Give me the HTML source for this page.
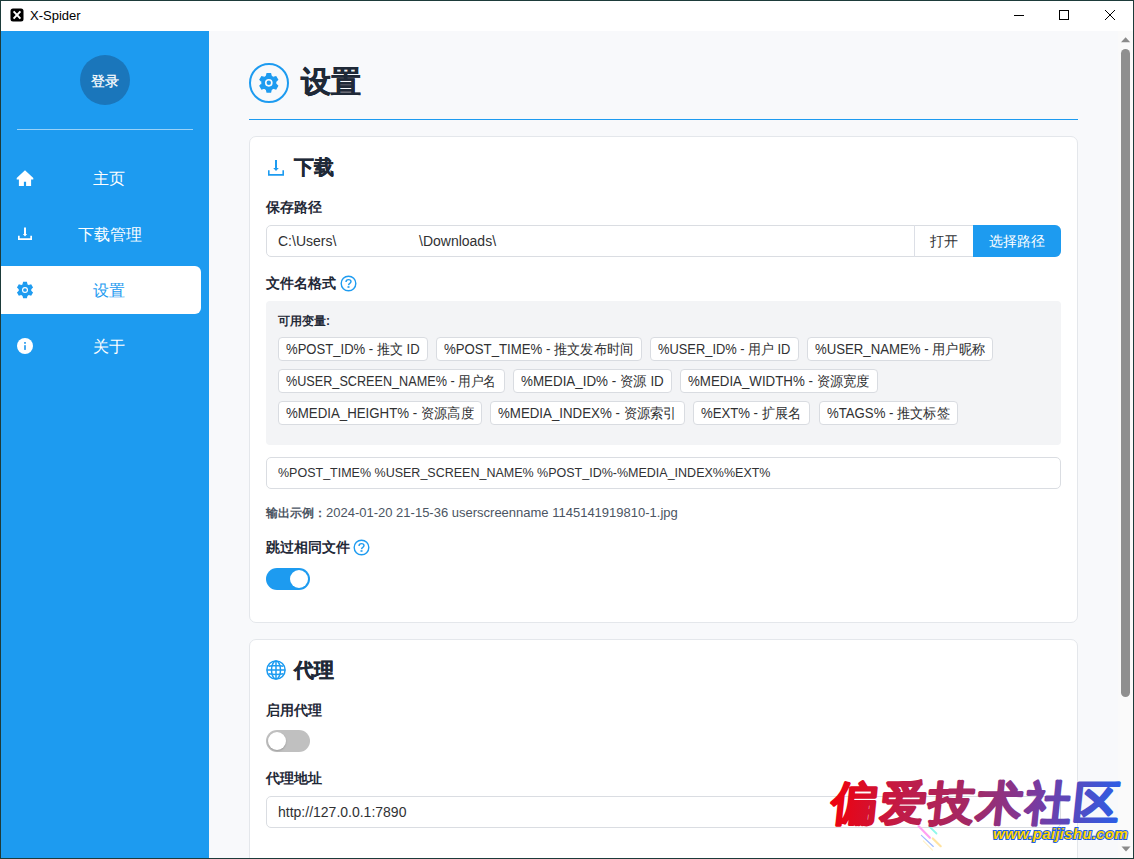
<!DOCTYPE html>
<html><head><meta charset="utf-8">
<style>
*{box-sizing:border-box;margin:0;padding:0}
html,body{width:1134px;height:859px;overflow:hidden;background:#1d3b3a;font-family:"Liberation Sans",sans-serif}
.abs{position:absolute}
#win{position:absolute;left:1px;top:1px;width:1132px;height:857px;background:#f8f9fb;overflow:hidden}
#title{position:absolute;left:0;top:0;width:1132px;height:30px;background:#fff}
#side{position:absolute;left:0;top:30px;width:208px;height:827px;background:#1d9bf0}
.nav{position:absolute;left:0;width:200px;height:48px;color:#fff;font-size:16px}
.nav .lb{position:absolute;top:1px;line-height:48px;white-space:nowrap}
.nav.act{background:#fff;border-radius:0 6px 6px 0;color:#1d9bf0}
.card{position:absolute;left:248px;width:829px;background:#fff;border:1px solid #e4e7eb;border-radius:7px}
.lbl{position:absolute;font-size:14px;font-weight:bold;color:#1f2937;white-space:nowrap}
.inp{position:absolute;background:#fff;border:1px solid #dadde2;border-radius:5px;height:32px;font-size:14px;color:#303133;white-space:nowrap}
.tag{position:absolute;height:24px;background:#fff;border:1px solid #d9dce1;border-radius:4px;font-size:14px;color:#303133;line-height:22px;padding:0 7px;white-space:nowrap}
.tag span{display:inline-block;transform:scaleX(.925);transform-origin:0 50%}
</style></head><body>
<div id="win">
  <div id="title">
    <svg class="abs" style="left:9px;top:7px" width="14" height="14" viewBox="0 0 14 14"><rect x="0.5" y="0.5" width="13" height="13" rx="2.5" fill="#000"/><path d="M3.6 3.4 L10.4 10.6 M10.4 3.4 L3.6 10.6" stroke="#fff" stroke-width="2"/></svg>
    <div class="abs" style="left:29px;top:7px;font-size:13px;color:#000">X-Spider</div>
    <svg class="abs" style="left:1000px;top:0" width="132" height="30"><path d="M13 14.5h10" stroke="#000" stroke-width="1"/><rect x="58.5" y="9.5" width="9" height="9" fill="none" stroke="#000"/><path d="M104 9 L114 19 M114 9 L104 19" stroke="#000"/></svg>
  </div>
  <div id="side">
    <div class="abs" style="left:79px;top:24px;width:50px;height:50px;border-radius:50%;background:#1a76bb;color:#fff;font-size:14px;line-height:52px;-webkit-text-stroke:0.25px #fff;text-align:center">登录</div>
    <div class="abs" style="left:16px;top:98px;width:176px;height:1px;background:rgba(255,255,255,.55)"></div>
    <div class="nav" style="top:123px">
      <svg class="abs" style="left:0;top:0" width="40" height="48"><path d="M24 16.2 L32.3 24 V25.6 H30.1 V32 H25.1 V27.8 H22.9 V32 H17.9 V25.6 H15.7 V24 Z" fill="#fff"/></svg>
      <div class="lb" style="left:92px">主页</div>
    </div>
    <div class="nav" style="top:179px">
      <svg class="abs" style="left:0;top:0" width="40" height="48"><path d="M23 17.4H25V24H23Z M21.9 23.9H26.1L24 26.4Z" fill="#fff"/><path d="M17.85 25.8V29.1H30.15V25.8" fill="none" stroke="#fff" stroke-width="1.7"/></svg>
      <div class="lb" style="left:77px">下载管理</div>
    </div>
    <div class="nav act" style="top:235px">
      <svg class="abs" style="left:15px;top:15px" width="18" height="18" viewBox="-9 -9 18 18"><g fill="#1d9bf0"><circle r="6.3"/><path d="M-2.50 -5.70L-1.90 -8.20L1.90 -8.20L2.50 -5.70ZM3.69 -5.02L6.15 -5.75L8.05 -2.45L6.19 -0.68ZM6.19 0.68L8.05 2.45L6.15 5.75L3.69 5.02ZM2.50 5.70L1.90 8.20L-1.90 8.20L-2.50 5.70ZM-3.69 5.02L-6.15 5.75L-8.05 2.45L-6.19 0.68ZM-6.19 -0.68L-8.05 -2.45L-6.15 -5.75L-3.69 -5.02Z"/></g><circle r="3.0" fill="#fff"/><circle r="1.85" fill="#1d9bf0"/></svg>
      <div class="lb" style="left:92px">设置</div>
    </div>
    <div class="nav" style="top:291px">
      <svg class="abs" style="left:16px;top:16px" width="16" height="16" viewBox="0 0 16 16"><circle cx="8" cy="8" r="8" fill="#fff"/><rect x="7" y="7.2" width="2" height="4.7" fill="#4aaaf0"/><rect x="7" y="4" width="2" height="1.8" fill="#4aaaf0"/></svg>
      <div class="lb" style="left:92px">关于</div>
    </div>
  </div>
  <!-- main -->
  <div class="abs" style="left:1117px;top:30px;width:15px;height:827px;background:#fafafa"></div>
  <svg class="abs" style="left:1117px;top:30px" width="15" height="827"><path d="M3 11.3 L7.6 6.3 L12.2 11.3Z" fill="#8a8a8a"/><path d="M3.5 815.5 L12.5 815.5 L8 820.5Z" fill="#8a8a8a"/><rect x="3" y="18" width="9" height="648" rx="4.5" fill="#8f8f8f"/></svg>

  <div class="abs" style="left:248px;top:62px;width:40px;height:40px;border:2px solid #1d9bf0;border-radius:50%"></div>
  <svg class="abs" style="left:257.2px;top:71.1px" width="21.6" height="21.6" viewBox="-9 -9 18 18"><g fill="#1d9bf0"><circle r="6.3"/><path d="M-2.50 -5.70L-1.90 -8.20L1.90 -8.20L2.50 -5.70ZM3.69 -5.02L6.15 -5.75L8.05 -2.45L6.19 -0.68ZM6.19 0.68L8.05 2.45L6.15 5.75L3.69 5.02ZM2.50 5.70L1.90 8.20L-1.90 8.20L-2.50 5.70ZM-3.69 5.02L-6.15 5.75L-8.05 2.45L-6.19 0.68ZM-6.19 -0.68L-8.05 -2.45L-6.15 -5.75L-3.69 -5.02Z"/></g><circle r="3.2" fill="#f8f9fb"/><circle r="1.85" fill="#1d9bf0"/></svg>
  <div class="abs" style="left:300px;top:61px;font-size:30px;font-weight:bold;color:#1f2937;line-height:40px;-webkit-text-stroke:0.4px #1f2937">设置</div>
  <div class="abs" style="left:248px;top:118px;width:829px;height:1px;background:#1d9bf0"></div>

  <!-- card 1 -->
  <div class="card" style="top:135px;height:487px"></div>
  <svg class="abs" style="left:265px;top:157px" width="20" height="20" viewBox="0 0 20 20"><path d="M9 1.9H11V10.2H9Z M7.2 10H12.8L10 13.1Z" fill="#1d9bf0"/><path d="M2.8 12.3V16.9H17.2V12.3" fill="none" stroke="#1d9bf0" stroke-width="1.6"/></svg>
  <div class="lbl" style="left:293px;top:153px;font-size:20px;-webkit-text-stroke:0.3px #1f2937">下载</div>
  <div class="lbl" style="left:265px;top:198px">保存路径</div>
  <div class="inp" style="left:265px;top:224px;width:795px;border-radius:5px 6px 6px 5px"></div>
  <div class="abs" style="left:277px;top:232px;font-size:14px;color:#303133">C:\Users\</div>
  <div class="abs" style="left:418px;top:232px;font-size:14px;color:#303133">\Downloads\</div>
  <div class="abs" style="left:913px;top:224px;width:59px;height:32px;border-left:1px solid #dcdfe6;font-size:14px;line-height:32px;text-align:center;color:#303133;text-indent:-1px">打开</div>
  <div class="abs" style="left:972px;top:224px;width:88px;height:32px;background:#1d9bf0;border-radius:0 6px 6px 0;font-size:14px;line-height:32px;text-align:center;color:#fff;text-indent:-1px">选择路径</div>

  <div class="lbl" style="left:265px;top:274px">文件名格式</div>
  <svg class="abs" style="left:338.5px;top:273.5px" width="17" height="17" viewBox="0 0 17 17"><g fill="none" stroke="#1d9bf0" stroke-width="1.4"><circle cx="8.5" cy="8.5" r="7.3"/><path d="M6.0 7.0C6.0 5.5 7.0 4.6 8.5 4.6C10.0 4.6 11.0 5.5 11.0 6.6C11.0 7.8 9.8 8.3 9.1 9.0L8.4 10.0"/></g><rect x="7.5" y="11.2" width="2" height="1.6" fill="#1d9bf0"/></svg>

  <div class="abs" style="left:265px;top:300px;width:795px;height:144px;background:#f3f4f6;border-radius:4px"></div>
  <div class="lbl" style="left:277px;top:312px;font-size:12px">可用变量:</div>
  <div class="tag" style="left:277px;top:336px;width:150px"><span style="transform:scaleX(0.934)">%POST_ID% - 推文 ID</span></div>
  <div class="tag" style="left:435px;top:336px;width:206px"><span style="transform:scaleX(0.943)">%POST_TIME% - 推文发布时间</span></div>
  <div class="tag" style="left:649px;top:336px;width:149px"><span style="transform:scaleX(0.920)">%USER_ID% - 用户 ID</span></div>
  <div class="tag" style="left:806px;top:336px;width:186px"><span style="transform:scaleX(0.942)">%USER_NAME% - 用户昵称</span></div>
  <div class="tag" style="left:277px;top:368px;width:227px"><span style="transform:scaleX(0.903)">%USER_SCREEN_NAME% - 用户名</span></div>
  <div class="tag" style="left:512px;top:368px;width:159px"><span style="transform:scaleX(0.956)">%MEDIA_ID% - 资源 ID</span></div>
  <div class="tag" style="left:679px;top:368px;width:198px"><span style="transform:scaleX(0.950)">%MEDIA_WIDTH% - 资源宽度</span></div>
  <div class="tag" style="left:277px;top:400px;width:204px"><span style="transform:scaleX(0.947)">%MEDIA_HEIGHT% - 资源高度</span></div>
  <div class="tag" style="left:489px;top:400px;width:195px"><span style="transform:scaleX(0.949)">%MEDIA_INDEX% - 资源索引</span></div>
  <div class="tag" style="left:692px;top:400px;width:117px"><span style="transform:scaleX(0.939)">%EXT% - 扩展名</span></div>
  <div class="tag" style="left:818px;top:400px;width:139px"><span style="transform:scaleX(0.942)">%TAGS% - 推文标签</span></div>

  <div class="inp" style="left:265px;top:456px;width:795px"></div>
  <div class="abs" style="left:277px;top:465px;font-size:12.5px;color:#303133;white-space:nowrap">%POST_TIME% %USER_SCREEN_NAME% %POST_ID%-%MEDIA_INDEX%%EXT%</div>
  <div class="abs" style="left:265px;top:504px;font-size:12px;color:#4b5563;white-space:nowrap;font-weight:bold">输出示例：</div><div class="abs" style="left:325px;top:504px;font-size:13px;color:#4b5563;white-space:nowrap">2024-01-20 21-15-36 userscreenname 1145141919810-1.jpg</div>

  <div class="lbl" style="left:265px;top:538px">跳过相同文件</div>
  <svg class="abs" style="left:352.4px;top:537.6px" width="17" height="17" viewBox="0 0 17 17"><g fill="none" stroke="#1d9bf0" stroke-width="1.4"><circle cx="8.5" cy="8.5" r="7.3"/><path d="M6.0 7.0C6.0 5.5 7.0 4.6 8.5 4.6C10.0 4.6 11.0 5.5 11.0 6.6C11.0 7.8 9.8 8.3 9.1 9.0L8.4 10.0"/></g><rect x="7.5" y="11.2" width="2" height="1.6" fill="#1d9bf0"/></svg>
  <div class="abs" style="left:265px;top:567px;width:44px;height:22px;border-radius:11px;background:#1d9bf0"></div>
  <div class="abs" style="left:289px;top:569px;width:18px;height:18px;border-radius:50%;background:#fff"></div>

  <!-- card 2 -->
  <div class="card" style="top:638px;height:260px"></div>
  <svg class="abs" style="left:264.1px;top:657.9px" width="22" height="22" viewBox="0 0 22 22"><g fill="none" stroke="#1d9bf0" stroke-width="1.5"><circle cx="11" cy="11" r="9.1"/><ellipse cx="11" cy="11" rx="4.5" ry="9.1"/><path d="M11 1.9V20.1 M1.9 11H20.1 M3.6 7.2Q11 5.6 18.4 7.2 M3.6 14.8Q11 16.4 18.4 14.8"/></g></svg>
  <div class="lbl" style="left:293px;top:656px;font-size:20px;-webkit-text-stroke:0.3px #1f2937">代理</div>
  <div class="lbl" style="left:265px;top:701px">启用代理</div>
  <div class="abs" style="left:265px;top:729px;width:44px;height:22px;border-radius:11px;background:#c0c0c0"></div>
  <div class="abs" style="left:267px;top:731px;width:18px;height:18px;border-radius:50%;background:#fff;box-shadow:0 1px 2px rgba(0,0,0,.2)"></div>
  <div class="lbl" style="left:265px;top:769px">代理地址</div>
  <div class="inp" style="left:265px;top:795px;width:795px"></div>
  <div class="abs" style="left:277px;top:803px;font-size:14px;color:#303133">http://127.0.0.1:7890</div>

  <!-- watermark -->
  <svg class="abs" style="left:0;top:0" width="1132" height="857"><g stroke-linecap="round"><path d="M917.5 825.1L928.9 836.8" stroke="#ffa0f2" stroke-width="2.2"/><path d="M928.4 825.6L935.5 832.5" stroke="#8ff8ea" stroke-width="1.8"/><path d="M920.4 834.4L932.3 845.5" stroke="#9cb8ff" stroke-width="1.1"/><path d="M931.8 837.5L939.7 845.2" stroke="#ffe3a0" stroke-width="2.2"/><path d="M922.3 839.9L931.5 849.2" stroke="#fff0c4" stroke-width="1.1"/></g></svg>
  <svg class="abs" style="left:825px;top:762px" width="312" height="70"><defs><linearGradient id="wg" x1="0" x2="1" y1="0" y2="0"><stop offset="0" stop-color="#f0000c"/><stop offset="0.25" stop-color="#c01c48"/><stop offset="0.5" stop-color="#a02a68"/><stop offset="0.7" stop-color="#7a3a9e"/><stop offset="1" stop-color="#2a5ee8"/></linearGradient></defs><text x="10" y="56" font-family="Liberation Sans" font-size="46" font-weight="bold" fill="url(#wg)" stroke="url(#wg)" stroke-width="1.8" stroke-linejoin="round" letter-spacing="2" transform="skewX(-6)" textLength="290">偏爱技术社区</text></svg>
  <div class="abs" style="left:992px;top:824px;font-size:15px;font-weight:bold;font-style:italic;color:#ffd400;-webkit-text-stroke:2px #1e5ee0;paint-order:stroke fill;white-space:nowrap;letter-spacing:0.3px">www.paijishu.com</div>
</div>
</body></html>
